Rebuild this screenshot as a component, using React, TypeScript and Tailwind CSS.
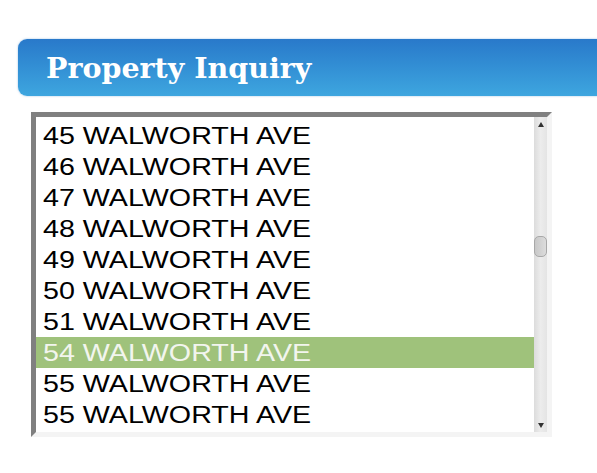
const addresses = [
  "45 WALWORTH AVE",
  "46 WALWORTH AVE",
  "47 WALWORTH AVE",
  "48 WALWORTH AVE",
  "49 WALWORTH AVE",
  "50 WALWORTH AVE",
  "51 WALWORTH AVE",
  "54 WALWORTH AVE",
  "55 WALWORTH AVE",
  "55 WALWORTH AVE",
];

const selected = 7;

function Scrollbar() {
  return (
    <div className="w-[13px] flex flex-col items-center bg-gradient-to-r from-[#dcdcdc] via-[#ececec] to-[#e4e4e4]">
      <div className="h-[14px] flex items-center justify-center">
        <div className="w-0 h-0 border-l-[3px] border-r-[3px] border-b-[5px] border-l-transparent border-r-transparent border-b-[#333]" />
      </div>
      <div className="flex-1 w-full relative">
        <div className="absolute left-0 right-0 top-[105px] h-[21px] rounded-[5px] border border-[#a8a8a8] bg-gradient-to-r from-[#c8c8c8] to-[#dcdcdc]" />
      </div>
      <div className="h-[14px] flex items-center justify-center">
        <div className="w-0 h-0 border-l-[3px] border-r-[3px] border-t-[5px] border-l-transparent border-r-transparent border-t-[#333]" />
      </div>
    </div>
  );
}

export default function App() {
  return (
    <div className="w-[597px] h-[473px] overflow-hidden bg-white pt-[39px]">
      <div className="ml-[18px] w-[600px] h-[57px] rounded-l-[9px] bg-gradient-to-b from-[#2979ca] to-[#3ea6df] flex items-center pl-[28px] shadow-[0_0_2px_rgba(41,121,202,0.5)]">
        <h1 className="text-white font-bold text-[28.5px] leading-none pt-[1px] font-['DejaVu_Serif',serif]">
          Property Inquiry
        </h1>
      </div>

      <div className="ml-[31px] mt-[16px] w-[521px] h-[325px] flex border-[5px] border-t-[#808080] border-l-[#808080] border-r-[#f4f4f4] border-b-[#f4f4f4] bg-white">
        <ul className="flex-1 overflow-hidden pt-[3px] font-['Liberation_Sans',Arial,sans-serif] text-[24.5px] leading-[31px]">
          {addresses.map((a, i) => (
            <li
              key={i}
              className={`h-[31px] pl-[7px] whitespace-nowrap ${i === selected ? "bg-[#9fc27b] text-[#f2f5ee]" : "text-black"}`}
            >
              <span className="inline-block origin-left scale-x-[1.17]">{a}</span>
            </li>
          ))}
        </ul>
        <Scrollbar />
      </div>
    </div>
  );
}
